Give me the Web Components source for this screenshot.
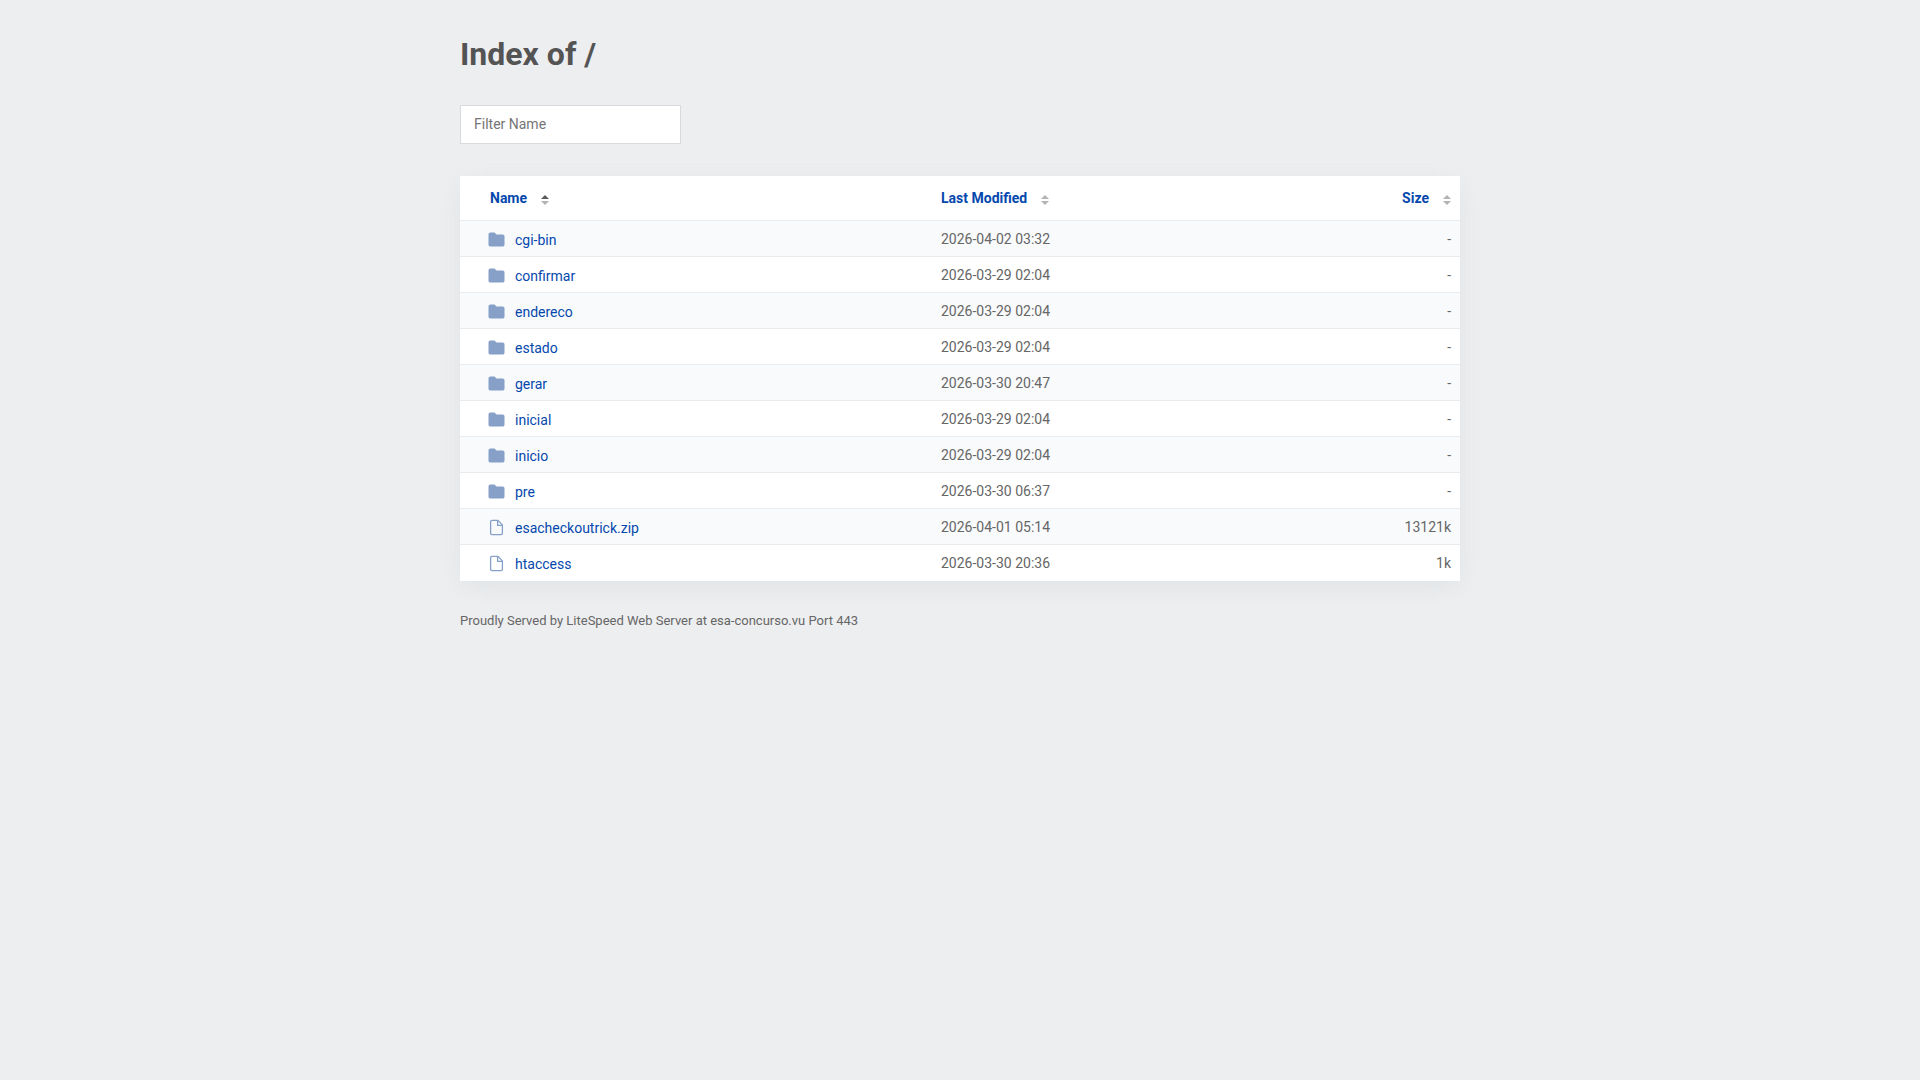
<!DOCTYPE html>
<html lang="en">
<head>
<meta charset="utf-8">
<title>Index of /</title>
<style>
  body { margin: 0; background: #edeef0; color: #545454; font: 14px/20px Roboto, sans-serif; }
</style>
</head>
<body>
<directory-page>
  <span slot="title">Index of /</span>
  <filter-box slot="filter"></filter-box>
  <file-table slot="files"></file-table>
  <span slot="footer">Proudly Served by LiteSpeed Web Server at esa-concurso.vu Port 443</span>
</directory-page>
<script>
class DirectoryPage extends HTMLElement {
  constructor() {
    super();
    this.attachShadow({ mode: 'open' }).innerHTML = `
      <style>
        :host { display: block; box-sizing: border-box; max-width: 1040px; margin: 0 auto; padding: 35px 20px; }
        main { display: flex; flex-direction: column; gap: 32px; }
        h1 { margin: 0; font-size: 32px; line-height: 38px; font-weight: 700; color: #545454; }
        footer { font-size: 13px; line-height: 16px; color: #666; }
      </style>
      <main>
        <h1><slot name="title"></slot></h1>
        <slot name="filter"></slot>
        <slot name="files"></slot>
        <footer><slot name="footer"></slot></footer>
      </main>`;
  }
}

class FilterBox extends HTMLElement {
  constructor() {
    super();
    this.attachShadow({ mode: 'open' }).innerHTML = `
      <style>
        :host { display: flex; }
        input { box-sizing: border-box; width: 221px; height: 39px; margin: 0; padding: 0 13px 2px; border: 1px solid #d8dadd;
          border-radius: 0; background: #fff; color: #545454; font: inherit; }
        input::placeholder { color: #757575; }
      </style>
      <input type="text" placeholder="Filter Name" aria-label="Filter Name">`;
    this.shadowRoot.querySelector('input').addEventListener('input', (event) => {
      document.querySelector('file-table').filter(event.target.value);
    });
  }
}

class SortMark extends HTMLElement {
  constructor() {
    super();
    this.attachShadow({ mode: 'open' }).innerHTML = `
      <style>
        :host { display: block; width: 8px; height: 10px; --up: #b3b3b3; --down: #b3b3b3; }
        :host([active]) { --up: #5c5c5c; }
        svg { display: block; }
      </style>
      <svg width="8" height="10" viewBox="0 0 8 10" aria-hidden="true">
        <path d="M0 4 4 0l4 4z" style="fill: var(--up)"/>
        <path d="M0 6h8L4 10z" style="fill: var(--down)"/>
      </svg>`;
  }
}

class FileIcon extends HTMLElement {
  connectedCallback() {
    const folder = '<path fill="#86a0c8" d="M2.4 1.5h4.2l1.8 1.9h6.2c1 0 1.9.8 1.9 1.8v8.5c0 1-.8 1.9-1.9 1.9H2.4C1.4 15.600.5 14.700.5 13.700V3.400c0-1 .9-1.900 1.900-1.900z"/>';
    const sheet = '<path fill="none" stroke="#86a0c8" stroke-width="1.3" stroke-linejoin="round" d="M10 1.4H4a1.400 1.400 0 0 0-1.400 1.400v11.400A1.400 1.400 0 0 0 4 15.600h9a1.400 1.400 0 0 0 1.400-1.400V5.900zM9.600 1.400v5h4.800"/>';
    this.attachShadow({ mode: 'open' }).innerHTML = `
      <style>:host { display: block; width: 17px; height: 18px; } svg { display: block; }</style>
      <svg width="17" height="18" viewBox="0 0 17 18" aria-hidden="true">${this.getAttribute('kind') === 'folder' ? folder : sheet}</svg>`;
  }
}

const FILES = [
  ['cgi-bin', '2026-04-02 03:32', '-'],
  ['confirmar', '2026-03-29 02:04', '-'],
  ['endereco', '2026-03-29 02:04', '-'],
  ['estado', '2026-03-29 02:04', '-'],
  ['gerar', '2026-03-30 20:47', '-'],
  ['inicial', '2026-03-29 02:04', '-'],
  ['inicio', '2026-03-29 02:04', '-'],
  ['pre', '2026-03-30 06:37', '-'],
  ['esacheckoutrick.zip', '2026-04-01 05:14', '13121k'],
  ['htaccess', '2026-03-30 20:36', '1k']
];

class FileTable extends HTMLElement {
  constructor() {
    super();
    const rows = FILES.map(([name, date, size]) => `
      <tr>
        <td><a href="#${name}"><file-icon kind="${size === '-' ? 'folder' : 'file'}"></file-icon><span>${name}</span></a></td>
        <td>${date}</td>
        <td>${size}</td>
      </tr>`).join('');
    this.attachShadow({ mode: 'open' }).innerHTML = `
      <style>
        :host { display: block; background: #fff; box-shadow: 0 6px 24px -3px rgba(154, 176, 176, 0.2); }
        table { width: 100%; border-collapse: separate; border-spacing: 0; table-layout: fixed; }
        th, td { box-sizing: border-box; padding: 0 9px; border-bottom: 1px solid #e9ebed; text-align: left;
          font-weight: 400; color: #666; }
        th { height: 45px; }
        td { height: 36px; }
        tbody tr:last-child td { border-bottom: 0; }
        th:nth-child(1) { width: 47.2%; padding-left: 30px; }
        td:nth-child(1) { padding-left: 28px; }
        th:nth-child(3), td:nth-child(3) { width: 20%; text-align: right; }
        tbody tr:nth-child(odd) { background: #f9fafc; }
        button { display: inline-flex; align-items: center; gap: 14px; padding: 0; border: 0; background: none;
          color: #0548ad; font: inherit; font-weight: 700; cursor: pointer; }
        sort-mark { margin-top: 3px; }
        a { display: flex; align-items: center; gap: 10px; padding-top: 2px; color: #0548ad; text-decoration: none; }
      </style>
      <table>
        <thead><tr>
          <th aria-sort="ascending"><button type="button">Name<sort-mark active></sort-mark></button></th>
          <th><button type="button">Last Modified<sort-mark></sort-mark></button></th>
          <th><button type="button">Size<sort-mark></sort-mark></button></th>
        </tr></thead>
        <tbody>${rows}</tbody>
      </table>`;
  }
  filter(text) {
    this.shadowRoot.querySelectorAll('tbody tr').forEach((row, i) => {
      row.hidden = !FILES[i][0].toLowerCase().includes(text.toLowerCase());
    });
  }
}

customElements.define('sort-mark', SortMark);
customElements.define('file-icon', FileIcon);
customElements.define('file-table', FileTable);
customElements.define('filter-box', FilterBox);
customElements.define('directory-page', DirectoryPage);
</script>
</body>
</html>
